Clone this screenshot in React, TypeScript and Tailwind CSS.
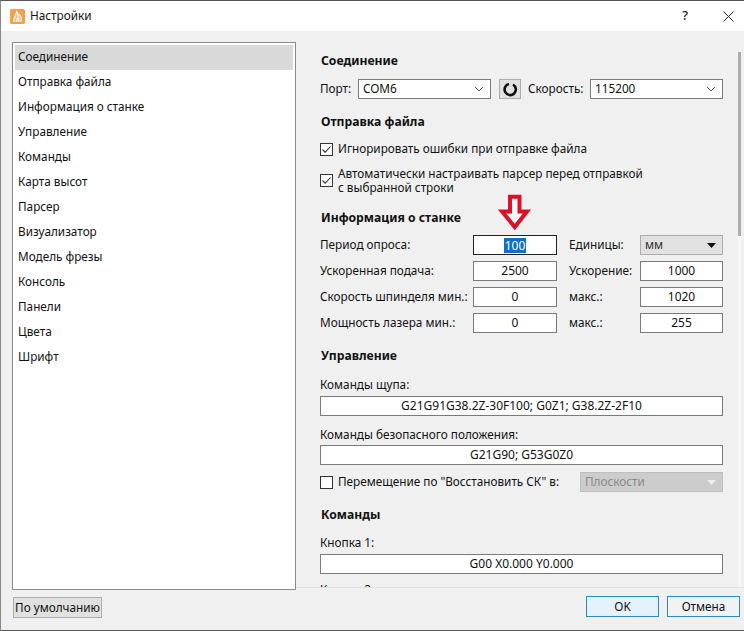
import React from "react";

const font = { fontFamily: '"Noto Sans", sans-serif' };

function Heading({ children, className = "" }: { children: React.ReactNode; className?: string }) {
  return <div className={`h-[18px] leading-[18px] text-[12.2px] font-bold text-[#111] ${className}`}>{children}</div>;
}

function Field({ value, w = "w-full", focused = false }: { value: string; w?: string; focused?: boolean }) {
  return (
    <div className={`${w} h-[20px] shrink-0 bg-white border flex items-center justify-center text-[12px] text-[#111] ${focused ? "border-[#222]" : "border-[#7a7a7a]"}`}>
      {focused ? <span className="bg-[#0f6fc6] text-white leading-[15px] px-px">{value}</span> : value}
    </div>
  );
}

function Check({ checked = false }: { checked?: boolean }) {
  return (
    <span className="w-[13px] h-[13px] shrink-0 bg-white border border-[#333] flex items-center justify-center">
      {checked && (
        <svg width="11" height="11" viewBox="0 0 11 11" fill="none">
          <path d="M1.5 5.5L4.2 8.2L9.5 2.5" stroke="#333" strokeWidth="1.1" />
        </svg>
      )}
    </span>
  );
}

function Combo({ value, w }: { value: string; w: string }) {
  return (
    <div className={`${w} h-[20px] shrink-0 bg-white border border-[#7a7a7a] flex items-center justify-between pl-[4px] pr-[6px] text-[#111]`}>
      <span>{value}</span>
      <svg width="10" height="6" viewBox="0 0 10 6" fill="none">
        <path d="M1 1L5 5L9 1" stroke="#555" strokeWidth="1" />
      </svg>
    </div>
  );
}

function Flat({ value, w, disabled = false }: { value: string; w: string; disabled?: boolean }) {
  return (
    <div className={`${w} h-[20px] shrink-0 border flex items-center justify-between pl-[4px] pr-[6px] ${disabled ? "bg-[#cccccc] border-[#bfbfbf] text-[#8a8a8a]" : "bg-[#e1e1e1] border-[#adadad] text-[#333]"}`}>
      <span>{value}</span>
      <svg width="9" height="5" viewBox="0 0 9 5">
        <path d="M0 0H9L4.5 5Z" fill={disabled ? "#eeeeee" : "#111"} />
      </svg>
    </div>
  );
}

const items = ["Соединение", "Отправка файла", "Информация о станке", "Управление", "Команды", "Карта высот", "Парсер", "Визуализатор", "Модель фрезы", "Консоль", "Панели", "Цвета", "Шрифт"];

function InfoRow({ label, value, label2, right, focused = false }: { label: string; value: string; label2: string; right: React.ReactNode; focused?: boolean }) {
  return (
    <div className="flex items-center h-[20px] mb-[6px]">
      <span className="w-[153px] shrink-0 whitespace-nowrap">{label}</span>
      <Field value={value} w="w-[84px]" focused={focused} />
      <span className="w-[71px] ml-[12px] shrink-0 whitespace-nowrap">{label2}</span>
      {right}
    </div>
  );
}

export default function App() {
  return (
    <div style={font} className="relative w-[744px] h-[631px] overflow-hidden bg-[#f0f0f0] text-[11.75px] text-[#111] border-t border-b border-l border-t-[#555] border-b-[#555] border-l-[#888] flex flex-col">
      <div className="h-[30px] shrink-0 bg-white flex items-center pl-[9px]">
        <svg width="15" height="15" viewBox="0 0 15 15">
          <rect width="15" height="15" rx="1.5" fill="#f2a04c" />
          <path d="M4.2 13C2.6 10 5.6 7.5 6.6 2.5C8 4 8.3 5.5 8.2 7L9.6 5.5C11.6 8 12.2 10.5 10.8 13" fill="#f7bf85" stroke="#fff" strokeWidth="1.1" />
          <path d="M6.6 13L6.9 9.8L8.6 8.6V13" fill="none" stroke="#fff" strokeWidth="1" />
        </svg>
        <span className="ml-[5px]">Настройки</span>
        <span className="ml-auto mr-[35px] text-[13px] font-medium text-[#222]">?</span>
        <svg className="mr-[10px]" width="11" height="11" viewBox="0 0 11 11" fill="none">
          <path d="M0.5 0.5L10.5 10.5M10.5 0.5L0.5 10.5" stroke="#222" strokeWidth="1" />
        </svg>
      </div>

      <div className="flex-1 min-h-0 flex">
        <div className="w-[295px] shrink-0 pl-[11px] pt-[11px] flex flex-col items-start">
          <div className="w-[284px] h-[548px] shrink-0 bg-white border border-[#8a8a8a] p-[2px]">
            {items.map((t, i) => (
              <div key={t} className={`h-[25px] leading-[23px] pl-[3px] ${i === 0 ? "bg-[#d9d9d9]" : ""}`}>{t}</div>
            ))}
          </div>
          <div className="mt-[7px] ml-px pt-px w-[89px] h-[21px] bg-[#e1e1e1] border border-[#adadad] flex items-center justify-center whitespace-nowrap">По умолчанию</div>
        </div>

        <div className="flex-1 min-w-0 flex flex-col">
          <div className="h-[557px] shrink-0 flex overflow-hidden border-b border-[#e0e0e0]">
            <div className="w-[403px] ml-[24px] shrink-0 pt-[21px]">
              <Heading className="ml-px">Соединение</Heading>
              <div className="flex items-center h-[20px] mt-[9px]">
                <span className="w-[38px]">Порт:</span>
                <Combo value="COM6" w="w-[133px]" />
                <div className="w-[22px] h-[20px] ml-[8px] bg-[#e1e1e1] border border-[#adadad] flex items-center justify-center">
                  <svg width="15" height="15" viewBox="0 0 15 15" fill="none">
                    <path d="M10 2.6A5.6 5.6 0 1 1 6 2" stroke="#111" strokeWidth="2.6" />
                  </svg>
                </div>
                <span className="w-[62px] ml-[7px]">Скорость:</span>
                <Combo value="115200" w="w-[133px]" />
              </div>

              <Heading className="ml-px mt-[14px]">Отправка файла</Heading>
              <div className="flex items-center gap-[5px] mt-[9px] h-[18px]">
                <Check checked />
                <span>Игнорировать ошибки при отправке файла</span>
              </div>
              <div className="flex items-center gap-[5px] mt-[8px]">
                <Check checked />
                <span className="leading-[14px]">Автоматически настраивать парсер перед отправкой<br />с выбранной строки</span>
              </div>

              <Heading className="ml-px mt-[15px]">Информация о станке</Heading>
              <div className="mt-[8px]">
                <InfoRow label="Период опроса:" value="100" focused label2="Единицы:" right={<Flat value="мм" w="w-[83px]" />} />
                <InfoRow label="Ускоренная подача:" value="2500" label2="Ускорение:" right={<Field value="1000" w="w-[83px]" />} />
                <InfoRow label="Скорость шпинделя мин.:" value="0" label2="макс.:" right={<Field value="1020" w="w-[83px]" />} />
                <InfoRow label="Мощность лазера мин.:" value="0" label2="макс.:" right={<Field value="255" w="w-[83px]" />} />
              </div>

              <Heading className="ml-px mt-[14px]">Управление</Heading>
              <div className="mt-[10px] h-[18px] leading-[18px]">Команды щупа:</div>
              <div className="mt-[3px]"><Field value="G21G91G38.2Z-30F100; G0Z1; G38.2Z-2F10" /></div>
              <div className="mt-[9px] h-[18px] leading-[18px]">Команды безопасного положения:</div>
              <div className="mt-[2px]"><Field value="G21G90; G53G0Z0" /></div>
              <div className="flex items-center mt-[7px] h-[20px]">
                <Check />
                <span className="ml-[5px] w-[242px] shrink-0">Перемещение по "Восстановить СК" в:</span>
                <Flat value="Плоскости" w="w-[143px]" disabled />
              </div>

              <Heading className="ml-px mt-[14px]">Команды</Heading>
              <div className="mt-[9px] h-[18px] leading-[18px]">Кнопка 1:</div>
              <div className="mt-[3px]"><Field value="G00 X0.000 Y0.000" /></div>
              <div className="mt-[6px] h-[18px] leading-[18px]">Кнопка 2:</div>
            </div>
            <div className="ml-auto mr-[3px] w-[3px] mt-[21px] bg-[#f6f6f6]">
              <div className="h-[184px] bg-[#adadad]" />
            </div>
          </div>
          <div className="flex-1 flex justify-end items-start pt-[8px] pr-[4px] gap-[8px]">
            <div className="w-[73px] h-[21px] pt-px bg-[#e5f1fb] border border-[#2b8ac6] flex items-center justify-center">OK</div>
            <div className="w-[73px] h-[21px] pt-px bg-[#f0f2f4] border border-[#2b8ac6] flex items-center justify-center">Отмена</div>
          </div>
        </div>
      </div>

      <svg className="absolute left-[497px] top-[192px]" width="34" height="40" viewBox="0 0 34 40" fill="none">
        <path d="M12 3.8H21.5V18.5H29L16.8 34L4 18.5H12Z" fill="#f6f6f6" stroke="#dc1028" strokeWidth="4" />
      </svg>
    </div>
  );
}
